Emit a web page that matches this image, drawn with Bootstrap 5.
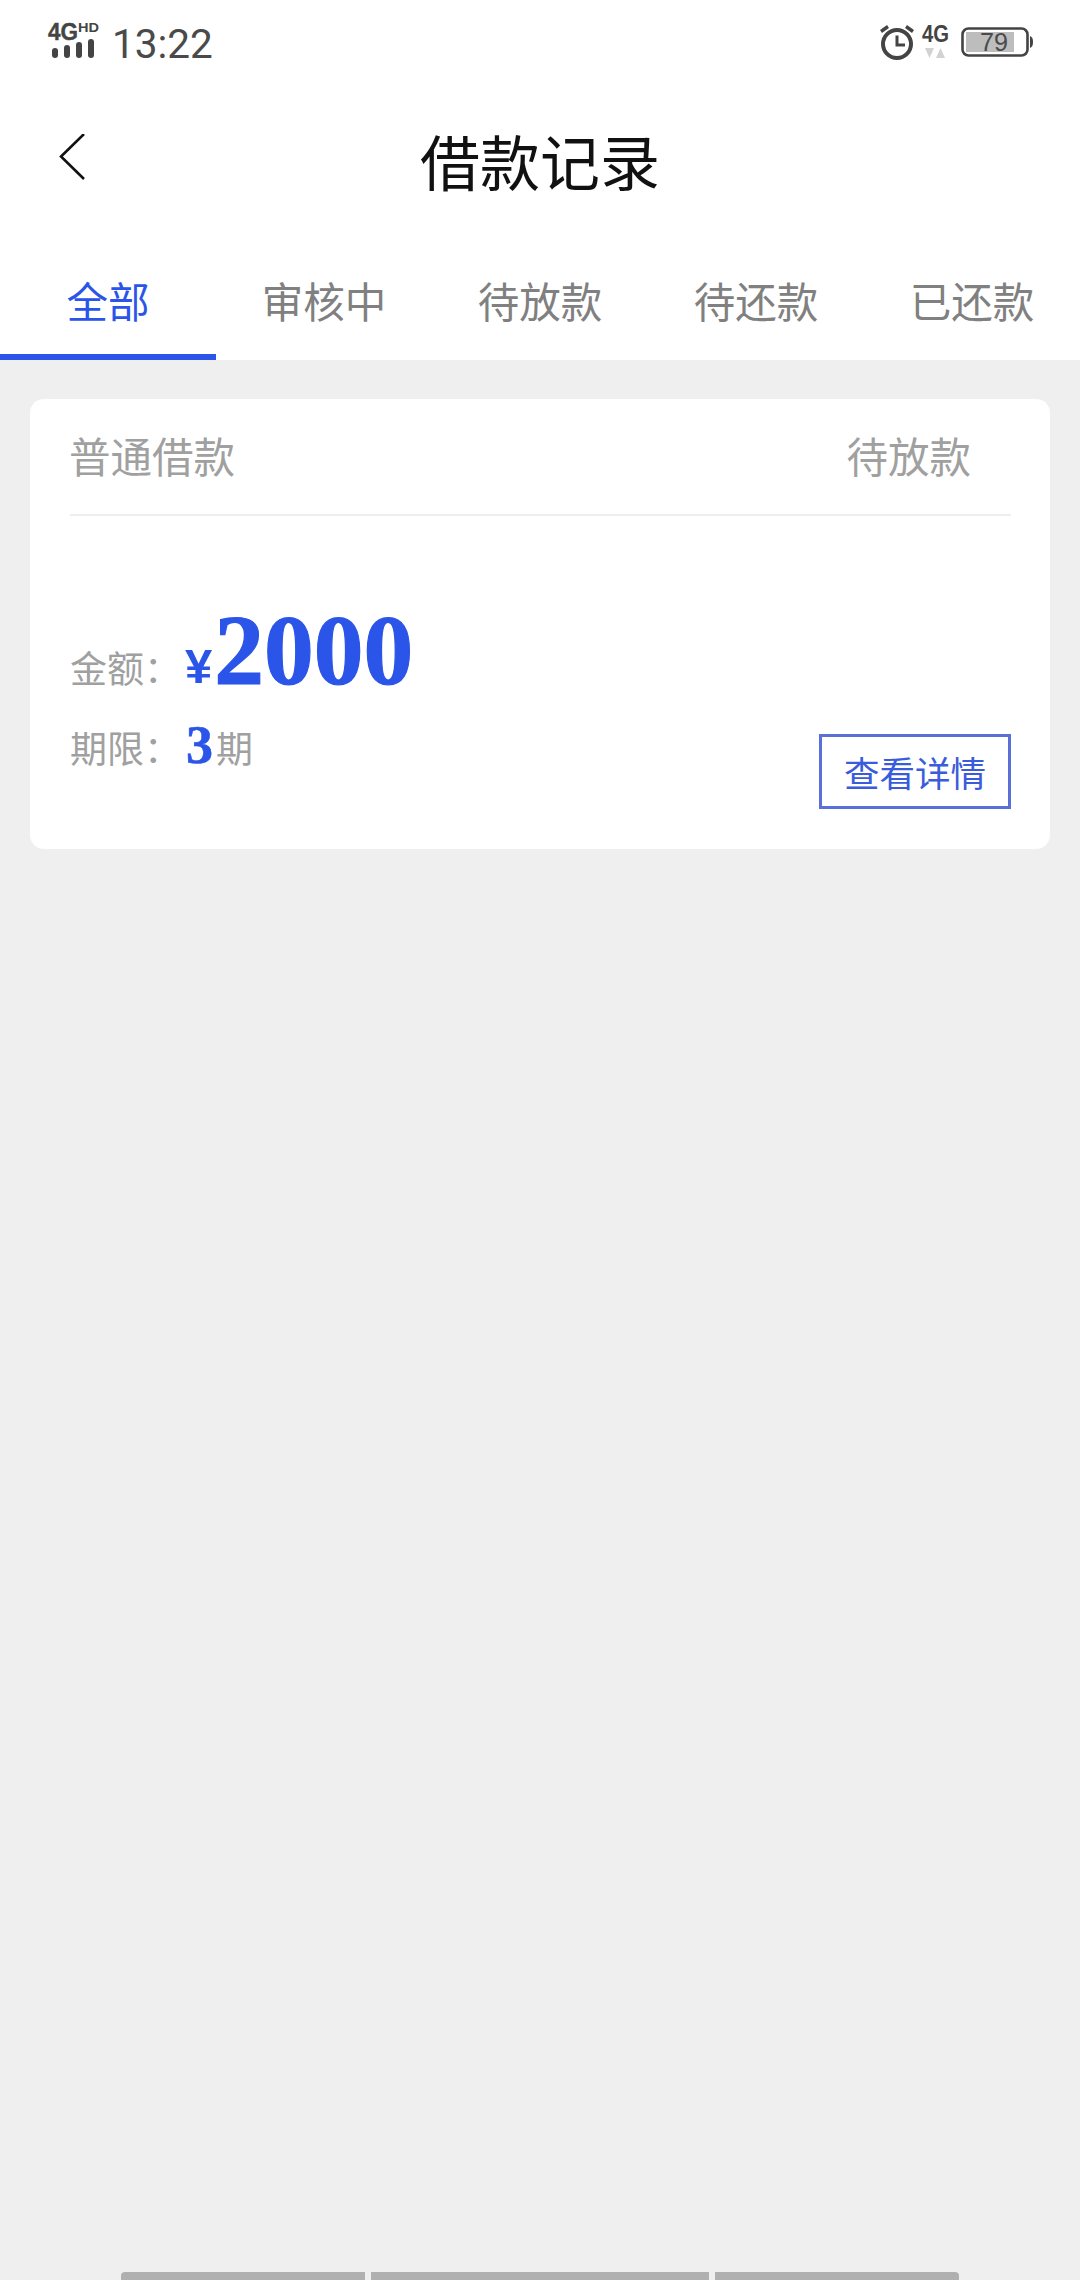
<!DOCTYPE html>
<html lang="zh-CN">
<head>
<meta charset="utf-8">
<title>借款记录</title>
<link rel="stylesheet" href="https://cdn.jsdelivr.net/npm/bootstrap@5.3.0/dist/css/bootstrap.min.css">
<style>
html,body{height:2280px;overflow:hidden;}
body{background:#efefef;font-family:"Noto Sans CJK SC","Liberation Sans",sans-serif;}
.screen{height:2280px;}
.top-area{background:#fff;}
.status-row{height:86px;padding:15px 47px 0 47px;}
.status-time{font-family:Roboto,sans-serif;font-size:40.5px;line-height:40px;color:#4a4a4a;margin:8px 0 0 13px;padding-top:1px;}
.status-svg{display:block;flex:none;}
.gap-4g{margin-left:5px;}
.gap-batt{margin-left:5px;}
.title-row{height:156px;}
.back-cell{width:120px;padding:48px 0 0 58px;}
.page-title{font-size:60px;line-height:60px;color:#111;font-weight:400;margin:0;padding-top:44px;}
.tabs-row .nav-link{height:118px;padding:36px 0 0;font-size:41.5px;line-height:44px;color:#808080;border-radius:0;border-bottom:6px solid transparent;}
.tabs-row .nav-link.active{color:#2b55e8;border-bottom-color:#2b55e8;}
.loan-card{margin:39px 30px 0;height:450px;border-radius:14px;background:#fff;padding:0 39px 40px 40px;}
.loan-head{height:117px;border-bottom:2px solid #eee;font-size:41.5px;line-height:42px;color:#a0a0a0;padding:0 40px 4px 0;}
.loan-head span:first-child{margin-left:-1px;}
.loan-body{flex:1;}
.info-row{color:#a0a0a0;font-size:37px;line-height:40px;}
.info-row.first{margin-top:85px;line-height:98px;height:98px;}
.info-row.second{margin-top:19px;line-height:54px;}
.info-label{width:115px;flex:none;}
.num-blue{font-family:"Liberation Serif",serif;font-weight:700;color:#2b55e8;}
.yen{font-family:"Liberation Sans",sans-serif;font-size:49px;margin-right:2px;}
.big-amount{font-size:99.500px;line-height:98px;-webkit-text-stroke:1.2px #2b55e8;}
.term-num{font-size:54px;line-height:54px;margin:0 3px 0 1px;-webkit-text-stroke:.6px #2b55e8;}
.detail-btn{width:192px;height:75px;padding:0;border:3px solid #5a70d8;border-radius:0;background:#fff;color:#3a5bdc;font-size:35.5px;line-height:69px;}
.detail-btn:hover{background:#fff;color:#3a5bdc;border-color:#5a70d8;}
.nav-bars{height:8px;padding:0 121px;gap:6px;}
.nav-seg{background:#b0b0b0;height:8px;}
.seg-a{width:244px;border-top-left-radius:4px;}
.seg-b{width:338px;}
.seg-c{width:244px;border-top-right-radius:4px;}
</style>
</head>
<body>
<div class="screen d-flex flex-column">
  <div class="top-area">
    <div class="status-row d-flex justify-content-between align-items-start">
      <div class="d-flex align-items-start">
        <svg class="status-svg" width="52" height="44" viewBox="-1 -8 52 44">
          <text x="0" y="17" font-family="Liberation Sans" font-weight="700" font-size="24" fill="#444" stroke="#444" stroke-width=".4" textLength="30" lengthAdjust="spacingAndGlyphs">4G</text>
          <text x="30" y="9" font-family="Liberation Sans" font-weight="700" font-size="12.500" fill="#444" textLength="21" lengthAdjust="spacingAndGlyphs">HD</text>
          <rect x="4" y="25" width="6" height="10" rx="3" fill="#444"/>
          <rect x="16" y="22" width="6" height="13" rx="3" fill="#444"/>
          <rect x="28" y="19" width="6" height="16" rx="3" fill="#444"/>
          <rect x="40" y="16" width="6" height="19" rx="3" fill="#444"/>
        </svg>
        <span class="status-time">13:22</span>
      </div>
      <div class="d-flex align-items-start">
        <svg class="status-svg" width="36" height="46" viewBox="0 -8 36 46" fill="none">
          <circle cx="18" cy="21" r="14" stroke="#444" stroke-width="4"/>
          <path d="M18 12.5V22H26" stroke="#444" stroke-width="3"/>
          <path d="M2 8.5 9 3.5M34 8.5 27 3.5" stroke="#444" stroke-width="3.4"/>
        </svg>
        <svg class="status-svg gap-4g" width="36" height="46" viewBox="0 -8 36 46">
          <text x="2" y="19" font-family="Liberation Sans" font-weight="700" font-size="24" fill="#444" textLength="27" lengthAdjust="spacingAndGlyphs">4G</text>
          <path d="M5 25H14L9.500 35Z M16 35H25L20.500 25Z" fill="#d2d2d2"/>
        </svg>
        <svg class="status-svg gap-batt" width="72" height="42" viewBox="0 -8 72 42">
          <rect x="1.500" y="5.500" width="65" height="27" rx="6" fill="none" stroke="#444" stroke-width="2.600"/>
          <rect x="5" y="9" width="48" height="20" fill="#bdbdbd"/>
          <text x="19" y="28" font-family="Liberation Sans" font-size="25" fill="#4a4a4a" textLength="28" lengthAdjust="spacingAndGlyphs">79</text>
          <path d="M69 13C71.500 14 72 16 72 19S71.500 24 69 25Z" fill="#444"/>
        </svg>
      </div>
    </div>
    <div class="title-row d-flex">
      <div class="back-cell">
        <svg class="status-svg" width="28" height="48" viewBox="0 0 28 48" fill="none">
          <path d="M26 0 3 22.500 26 45" stroke="#111" stroke-width="2.600"/>
        </svg>
      </div>
      <h1 class="page-title flex-grow-1 text-center">借款记录</h1>
      <div class="back-cell"></div>
    </div>
    <nav class="tabs-row nav nav-justified">
      <a class="nav-link active" href="#">全部</a>
      <a class="nav-link" href="#">审核中</a>
      <a class="nav-link" href="#">待放款</a>
      <a class="nav-link" href="#">待还款</a>
      <a class="nav-link" href="#">已还款</a>
    </nav>
  </div>

  <div class="loan-card card border-0 d-flex flex-column">
    <div class="loan-head d-flex justify-content-between align-items-center">
      <span>普通借款</span>
      <span>待放款</span>
    </div>
    <div class="loan-body d-flex justify-content-between align-items-end">
      <div class="align-self-start">
        <div class="info-row first d-flex align-items-baseline">
          <span class="info-label">金额：</span>
          <span class="num-blue yen">¥</span>
          <span class="num-blue big-amount">2000</span>
        </div>
        <div class="info-row second d-flex align-items-baseline">
          <span class="info-label">期限：</span>
          <span class="num-blue term-num">3</span>
          <span>期</span>
        </div>
      </div>
      <button type="button" class="btn detail-btn">查看详情</button>
    </div>
  </div>

  <div class="nav-bars d-flex mt-auto">
    <div class="nav-seg seg-a"></div>
    <div class="nav-seg seg-b"></div>
    <div class="nav-seg seg-c"></div>
  </div>
</div>
<script src="https://cdn.jsdelivr.net/npm/bootstrap@5.3.0/dist/js/bootstrap.bundle.min.js"></script>
</body>
</html>
